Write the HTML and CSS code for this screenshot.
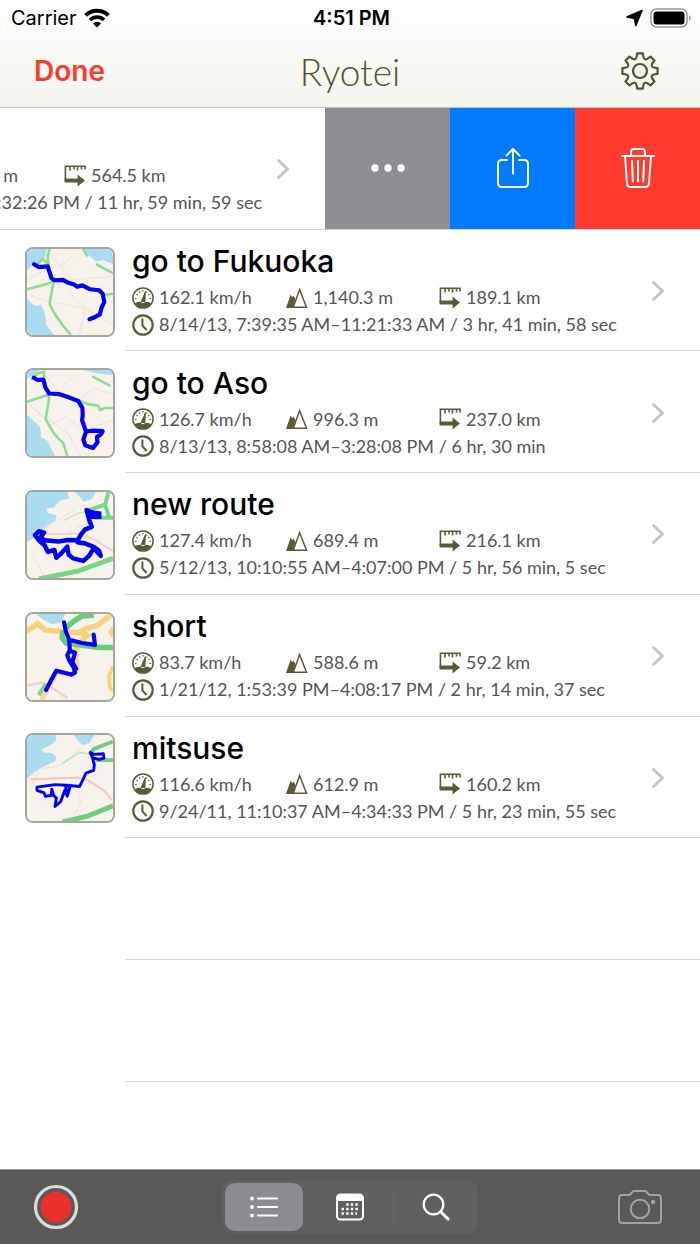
FILE: index.html
```html
<!DOCTYPE html>
<html lang="en">
<head>
  <meta charset="UTF-8">
  <meta name="viewport" content="width=device-width, initial-scale=1">
  <title>Ryotei</title>
  <link rel="stylesheet" href="styles.css">
</head>
<body>
  <!-- shared icons -->
  <svg class="sprite" aria-hidden="true">
    <symbol id="speed" viewBox="0 0 22 22">
      <circle cx="11" cy="11" r="10.1" fill="#fff" stroke="currentColor" stroke-width="1.5"/>
      <path d="M2.6 16.2Q6 14.6 8.6 14.8A2.7 2.7 0 0 0 13.4 14.8Q16 14.6 19.4 16.2A10 10 0 0 1 2.6 16.2Z" fill="currentColor"/>
      <path d="M9.2 14.6L13.4 4.6L12.9 14.6Z" fill="currentColor" stroke="currentColor" stroke-linejoin="round"/>
      <path d="M3 11.5h1.6M17.4 11.5H19M4.4 7.2l1.3.8M7.2 4.3l.8 1.3M11 3v1.6M16.2 8l1.4-.8M15.2 4.6l-.6 1" stroke="currentColor" stroke-width="1.2"/>
    </symbol>
    <symbol id="climb" viewBox="0 0 22 22">
      <path d="M0 21L4.6 7.8L6.4 10.2L7.6 8.6L9.4 12L6.8 21Z" fill="currentColor"/>
      <path d="M7.3 20.2L13.6 2.6L20.5 20.2Z" fill="#fff" stroke="currentColor" stroke-width="1.5"/>
    </symbol>
    <symbol id="distance" viewBox="0 0 22 22">
      <path d="M21 4.6V1.2H1.4V16M6 1.500v4M10 1.500v3M13.500 1.500v4M17.500 1.500v3" fill="none" stroke="currentColor" stroke-width="1.6"/>
      <path d="M.6 13.400h13v-4l7.400 6.200-7.400 6v-4.200H.6Z" fill="currentColor"/>
    </symbol>
    <symbol id="clock" viewBox="0 0 22 22">
      <circle cx="11" cy="11" r="9.7" fill="none" stroke="currentColor" stroke-width="2.2"/>
      <path d="M10.4 4.5V11.4L14.6 16" fill="none" stroke="currentColor" stroke-width="2"/>
    </symbol>
    <symbol id="chevron" viewBox="0 0 14 22">
      <path d="M2.5 2.5L11.5 11L2.5 19.5" fill="none" stroke="currentColor" stroke-width="2.8" stroke-linecap="round"/>
    </symbol>
    <path id="tooth" d="M14.1 7.2C15.6 6.6 15.8 4.6 16.2 1.4H21.8C22.2 4.6 22.4 6.6 23.9 7.2"/>
  </svg>

  <div class="app">
    <header class="header">
      <div class="status">
        <div class="carrier">
          <span>Carrier</span>
          <svg width="26" height="20" viewBox="0 0 26 20" fill="none" stroke="#000" stroke-width="4">
            <path d="M1.6 7.4A16 16 0 0 1 24.4 7.4"/>
            <path d="M6 12A10 10 0 0 1 20 12" stroke-width="3.6"/>
            <path d="M13 19.4L9 15.5A5.6 5.6 0 0 1 17 15.5Z" fill="#000" stroke="none"/>
          </svg>
        </div>
        <span class="time">4:51 PM</span>
        <div class="power">
          <svg width="17" height="18" viewBox="0 0 17 18">
            <path d="M1 8L16 1.500L9.800 16.500L8.500 9.500Z" stroke="#000" stroke-width="1.600" stroke-linejoin="round"/>
          </svg>
          <svg width="42" height="20" viewBox="0 0 42 20">
            <rect x="1" y="1" width="36" height="18" rx="5.5" fill="#fff" stroke="#999" stroke-width="1.5"/>
            <rect x="3.5" y="3.5" width="31" height="13" rx="3"/>
            <path d="M39 7Q42.4 10 39 13Z" fill="#999"/>
          </svg>
        </div>
      </div>
      <nav class="nav">
        <button class="done" type="button">Done</button>
        <h1 class="brand">Ryotei</h1>
        <button class="icon-button" type="button" aria-label="Settings">
          <svg width="38" height="38" viewBox="0 0 38 38" fill="none" stroke="#55532f" stroke-width="2.2" stroke-linejoin="round">
            <circle cx="19" cy="19" r="7"/>
            <use href="#tooth"/>
            <use href="#tooth" transform="rotate(45 19 19)"/>
            <use href="#tooth" transform="rotate(90 19 19)"/>
            <use href="#tooth" transform="rotate(135 19 19)"/>
            <use href="#tooth" transform="rotate(180 19 19)"/>
            <use href="#tooth" transform="rotate(225 19 19)"/>
            <use href="#tooth" transform="rotate(270 19 19)"/>
            <use href="#tooth" transform="rotate(315 19 19)"/>
          </svg>
        </button>
      </nav>
    </header>

    <ul class="list">
      <!-- swiped row -->
      <li class="row swiped">
        <div class="content">
          <div class="thumb"></div>
          <div class="body">
            <div class="info">
              <h2 class="name">&nbsp;</h2>
              <div class="stats">
                <span class="stat"></span>
                <span class="stat"><svg class="icon"><use href="#climb"/></svg>1,204.6 m</span>
                <span class="stat"><svg class="icon"><use href="#distance"/></svg>564.5 km</span>
              </div>
              <div class="stat"><svg class="icon"><use href="#clock"/></svg>8/15/13, 12:32:27 AM–12:32:26 PM / 11 hr, 59 min, 59 sec</div>
            </div>
            <svg class="chevron"><use href="#chevron"/></svg>
          </div>
        </div>
        <div class="actions">
          <button class="action more" type="button" aria-label="More">
            <svg width="36" height="10" viewBox="0 0 36 10" fill="#fff">
              <circle cx="5" cy="5" r="3.7"/><circle cx="18" cy="5" r="3.7"/><circle cx="31" cy="5" r="3.7"/>
            </svg>
          </button>
          <button class="action share" type="button" aria-label="Share">
            <svg width="36" height="42" viewBox="0 0 36 42" fill="none" stroke="#fff" stroke-width="2" stroke-linecap="round" stroke-linejoin="round">
              <path d="M12 13H7Q3 13 3 17V36Q3 40 7 40H29Q33 40 33 36V17Q33 13 29 13H24"/>
              <path d="M18 26.5V2M11.5 8.5L18 2L24.5 8.5"/>
            </svg>
          </button>
          <button class="action delete" type="button" aria-label="Delete">
            <svg width="36" height="42" viewBox="0 0 36 42" fill="none" stroke="#fff" stroke-width="2" stroke-linecap="round" stroke-linejoin="round">
              <path d="M2 9H34M5 9L7 36.5Q7.2 40 10.5 40H25.5Q28.8 40 29 36.5L31 9"/>
              <path d="M11 9V5Q11 2 14 2H22Q25 2 25 5V9M12 14L12.8 34.5M18 14V34.5M24 14L23.2 34.5"/>
            </svg>
          </button>
        </div>
      </li>

      <li class="row">
        <div class="content">
          <svg class="thumb" viewBox="48 35 267 267" fill="none">
            <path d="M48 35H315V302H48Z" fill="#f7f2ec"/>
            <path d="M48 35H110L104 62L78 76L48 102ZM226 35H315V82L285 70L262 74L240 54ZM48 190L72 212L92 208L104 236L108 270L132 302H48Z" fill="#a9dcf1"/>
            <path d="M110 40L150 90L200 50M150 90L190 130L315 120M130 200L230 220L315 270M180 170L230 220L210 302M48 130L125 90M60 180L120 200" stroke="#e6e1dc" stroke-width="3"/>
            <path d="M118 35L112 58L116 96L130 140L118 205Q134 245 184 302M48 160L110 144L130 134M78 84L96 66L112 80M222 35L236 58M262 82L315 110M285 178L315 174" stroke="#8bdb92" stroke-width="8"/>
            <path d="M70 82L84 91L112 89L124 125L132 132L160 131L172 138L194 145L204 152L220 148L244 160L272 163L283 174L288 200L280 216L274 238L258 247L242 253" class="track"/>
          </svg>
          <div class="body">
            <div class="info">
              <h2 class="name">go to Fukuoka</h2>
              <div class="stats">
                <span class="stat"><svg class="icon"><use href="#speed"/></svg>162.1 km/h</span>
                <span class="stat"><svg class="icon"><use href="#climb"/></svg>1,140.3 m</span>
                <span class="stat"><svg class="icon"><use href="#distance"/></svg>189.1 km</span>
              </div>
              <div class="stat"><svg class="icon"><use href="#clock"/></svg>8/14/13, 7:39:35 AM–11:21:33 AM / 3 hr, 41 min, 58 sec</div>
            </div>
            <svg class="chevron"><use href="#chevron"/></svg>
          </div>
        </div>
      </li>

      <li class="row">
        <div class="content">
          <svg class="thumb" viewBox="33 24 267 267" fill="none">
            <path d="M33 24H300V291H33Z" fill="#f7f2ec"/>
            <path d="M33 24H70L50 42L33 50ZM205 24H300V40L250 34ZM33 164L56 184L74 202L76 232L96 244L120 291H33Z" fill="#a9dcf1"/>
            <path d="M90 40L130 90L180 40M190 120L240 80L300 100M100 200L150 170L210 210L300 180M60 150L160 220L200 291M40 130L80 170" stroke="#e6e1dc" stroke-width="3"/>
            <path d="M33 123L96 102L102 110L91 176Q112 222 146 252L158 291M45 54L66 34L86 30V50M198 120L222 130L254 135L260 148L276 142L300 142M236 44L292 73" stroke="#8bdb92" stroke-width="8"/>
            <path d="M54 48L66 55L84 54L90 78L102 97L134 99L160 108L192 120L205 142L206 164L204 180L216 215L240 212L268 214L262 224L250 232L252 248L238 266L214 258L208 240L216 216" class="track"/>
          </svg>
          <div class="body">
            <div class="info">
              <h2 class="name">go to Aso</h2>
              <div class="stats">
                <span class="stat"><svg class="icon"><use href="#speed"/></svg>126.7 km/h</span>
                <span class="stat"><svg class="icon"><use href="#climb"/></svg>996.3 m</span>
                <span class="stat"><svg class="icon"><use href="#distance"/></svg>237.0 km</span>
              </div>
              <div class="stat"><svg class="icon"><use href="#clock"/></svg>8/13/13, 8:58:08 AM–3:28:08 PM / 6 hr, 30 min</div>
            </div>
            <svg class="chevron"><use href="#chevron"/></svg>
          </div>
        </div>
      </li>

      <li class="row">
        <div class="content">
          <svg class="thumb" viewBox="33 24 267 267" fill="none">
            <path d="M33 24H300V291H33Z" fill="#f7f2ec"/>
            <path d="M33 24H158L164 44L134 52L116 72L94 74L98 90L124 96L122 114L80 142L56 164L33 180ZM182 24H246L234 46L210 54L198 40Z" fill="#a9dcf1"/>
            <path d="M48 150L130 110L180 80M160 150L220 120L290 80M50 220L90 291M220 200L200 240L215 270" stroke="#e6e1dc" stroke-width="3"/>
            <path d="M80 154H200L250 176L300 208" stroke="#f3d2c9" stroke-width="7"/>
            <path d="M148 112L190 90L225 84" stroke="#c3e6bb" stroke-width="4"/>
            <path d="M224 80L256 70L276 62L286 24M276 66L290 108M244 104L300 104" stroke="#78d488" stroke-width="12"/>
            <path d="M70 294L190 270L300 230" stroke="#78d488" stroke-width="15"/>
            <path d="M240 90L218 80L226 110L234 132L214 140L202 154L190 174L160 173L130 178L88 174L74 166L86 150L70 146L58 158L70 174L88 190L98 210L118 204L124 228L138 216L158 194L162 218L176 230L208 238L226 222L240 198L262 222L256 206L240 194L214 184L190 180" class="track wide"/>
            <path d="M226 84L260 88V104H232Z" fill="#0500f0" stroke="#0500f0" stroke-width="8"/>
          </svg>
          <div class="body">
            <div class="info">
              <h2 class="name">new route</h2>
              <div class="stats">
                <span class="stat"><svg class="icon"><use href="#speed"/></svg>127.4 km/h</span>
                <span class="stat"><svg class="icon"><use href="#climb"/></svg>689.4 m</span>
                <span class="stat"><svg class="icon"><use href="#distance"/></svg>216.1 km</span>
              </div>
              <div class="stat"><svg class="icon"><use href="#clock"/></svg>5/12/13, 10:10:55 AM–4:07:00 PM / 5 hr, 56 min, 5 sec</div>
            </div>
            <svg class="chevron"><use href="#chevron"/></svg>
          </div>
        </div>
      </li>

      <li class="row">
        <div class="content">
          <svg class="thumb" viewBox="33 24 267 267" fill="none">
            <path d="M33 24H300V291H33Z" fill="#f7f2ec"/>
            <path d="M60 24H152L140 50L110 56L84 42Z" fill="#a9dcf1"/>
            <path d="M33 246L84 236L160 286" stroke="#f3d2c9" stroke-width="8"/>
            <path d="M70 276L92 242" stroke="#78d488" stroke-width="14"/>
            <path d="M33 78L66 54L90 74L150 80L196 82L210 72L250 60L296 26M196 82L220 90L190 120L182 150" stroke="#f7d27c" stroke-width="17"/>
            <path d="M300 66L292 80L300 94M300 186L288 216L290 250L300 264" stroke="#f7d27c" stroke-width="12"/>
            <path d="M184 140L188 196L176 214L124 204L78 291" stroke="#f8d79a" stroke-width="17"/>
            <path d="M146 76L142 98L154 114L210 122L256 128L300 128M150 70L176 48L204 30L240 28" stroke="#6bcb7c" stroke-width="17"/>
            <path d="M148 50L154 80L164 104L204 114L244 120L240 88M164 104L166 136L158 152L164 168L178 190L182 206L170 212L124 200L110 226L92 260M166 138L182 144L174 174L186 194" class="track"/>
          </svg>
          <div class="body">
            <div class="info">
              <h2 class="name">short</h2>
              <div class="stats">
                <span class="stat"><svg class="icon"><use href="#speed"/></svg>83.7 km/h</span>
                <span class="stat"><svg class="icon"><use href="#climb"/></svg>588.6 m</span>
                <span class="stat"><svg class="icon"><use href="#distance"/></svg>59.2 km</span>
              </div>
              <div class="stat"><svg class="icon"><use href="#clock"/></svg>1/21/12, 1:53:39 PM–4:08:17 PM / 2 hr, 14 min, 37 sec</div>
            </div>
            <svg class="chevron"><use href="#chevron"/></svg>
          </div>
        </div>
      </li>

      <li class="row">
        <div class="content">
          <svg class="thumb" viewBox="33 24 267 267" fill="none">
            <path d="M33 24H300V291H33Z" fill="#f7f2ec"/>
            <path d="M33 24H122L124 40L108 54L78 70L86 78L110 80L124 92L120 106L80 124L56 140L33 160ZM178 24H242L228 48L206 56L190 40Z" fill="#a9dcf1"/>
            <path d="M46 180L70 130L130 120L200 70M190 190L200 230L180 270M50 160L80 230" stroke="#e6e1dc" stroke-width="3"/>
            <path d="M42 162L190 156L220 164L270 194L296 226" stroke="#f3c9c0" stroke-width="7"/>
            <path d="M144 112L196 78L220 82" stroke="#b5e2ae" stroke-width="4"/>
            <path d="M226 86L240 68L264 58L300 44M246 102H300" stroke="#6bcf7d" stroke-width="12"/>
            <path d="M144 294L220 276L300 244" stroke="#6bcf7d" stroke-width="15"/>
            <path d="M236 94L230 78L240 84L270 82L272 96L256 100L236 94L242 116L240 134L216 142L206 164L196 184L156 180L120 178L64 186V196L86 204L90 214L108 212L110 192L116 212L124 220L120 246L138 230L150 196L158 214L168 180L152 184L160 206" class="track thin"/>
          </svg>
          <div class="body">
            <div class="info">
              <h2 class="name">mitsuse</h2>
              <div class="stats">
                <span class="stat"><svg class="icon"><use href="#speed"/></svg>116.6 km/h</span>
                <span class="stat"><svg class="icon"><use href="#climb"/></svg>612.9 m</span>
                <span class="stat"><svg class="icon"><use href="#distance"/></svg>160.2 km</span>
              </div>
              <div class="stat"><svg class="icon"><use href="#clock"/></svg>9/24/11, 11:10:37 AM–4:34:33 PM / 5 hr, 23 min, 55 sec</div>
            </div>
            <svg class="chevron"><use href="#chevron"/></svg>
          </div>
        </div>
      </li>

      <!-- empty rows -->
      <li class="row empty"></li>
      <li class="row empty"></li>
    </ul>

    <footer class="toolbar">
      <button class="icon-button record" type="button" aria-label="Record">
        <svg width="46" height="46" viewBox="0 0 46 46">
          <circle cx="23" cy="23" r="20.5" fill="none" stroke="#dcdcdc" stroke-width="3.2"/>
          <circle cx="23" cy="23" r="15.5" fill="#e8312a"/>
        </svg>
      </button>
      <div class="segments">
        <button class="segment selected" type="button" aria-label="List">
          <svg width="30" height="24" viewBox="0 0 30 24" fill="#fff" stroke="#fff" stroke-width="2.2" stroke-linecap="round">
            <path d="M9 3.5H28M9 12H28M9 20.5H28"/>
            <g stroke="none"><circle cx="3" cy="3.5" r="1.9"/><circle cx="3" cy="12" r="1.9"/><circle cx="3" cy="20.5" r="1.9"/></g>
          </svg>
        </button>
        <button class="segment" type="button" aria-label="Calendar">
          <svg width="30" height="28" viewBox="0 0 30 28">
            <rect x="2" y="1.5" width="26" height="25" rx="3.5" fill="none" stroke="#fff" stroke-width="2"/>
            <path d="M2 8V4Q2 1.5 5 1.5H25Q28 1.5 28 4V8Z" fill="#fff"/>
            <path d="M11.2 11.5H25M6.6 16H25M6.6 20.5H22" fill="none" stroke="#fff" stroke-width="2.4" stroke-dasharray="2.4 2.2"/>
          </svg>
        </button>
        <button class="segment" type="button" aria-label="Search">
          <svg width="28" height="28" viewBox="0 0 28 28" fill="none" stroke="#fff" stroke-linecap="round">
            <circle cx="11.5" cy="11.5" r="9.8" stroke-width="2.2"/>
            <path d="M19 19L26 26" stroke-width="3"/>
          </svg>
        </button>
      </div>
      <button class="icon-button" type="button" aria-label="Camera">
        <svg width="46" height="36" viewBox="0 0 46 36" fill="none" stroke="#a3a3a3" stroke-width="2" stroke-linejoin="round">
          <path d="M5 6H12.5L16.5 2H28.5L32.5 6H41Q44 6 44 9V31Q44 34 41 34H5Q2 34 2 31V9Q2 6 5 6Z"/>
          <circle cx="23" cy="20" r="9.3"/>
          <circle cx="36" cy="13" r="2.2" fill="#a3a3a3" stroke="none"/>
        </svg>
      </button>
    </footer>
  </div>
</body>
</html>
```
FILE: styles.css
```css
* {
  box-sizing: border-box;
}
body {
  margin: 0;
  background: #fff;
  color: #000;
  font-family: Inter, "Liberation Sans", sans-serif;
}
button {
  border: none;
  padding: 0;
  background: none;
  font: inherit;
  cursor: pointer;
}
svg {
  display: block;
}
.sprite {
  position: absolute;
  width: 0;
  height: 0;
}
.app {
  display: flex;
  flex-direction: column;
  min-height: 100vh;
}

/* header */
.header {
  background: linear-gradient(#fff, #f3f4ee);
  border-bottom: 1px solid #c3c4bc;
}
.status {
  display: grid;
  grid-template-columns: 1fr auto 1fr;
  align-items: center;
  height: 35px;
  padding: 0 8px 0 11px;
  font-size: 20px;
}
.carrier,
.power {
  display: flex;
  align-items: center;
  gap: 7px;
}
.power {
  justify-content: flex-end;
}
.time {
  font-weight: 600;
}
.nav {
  display: grid;
  grid-template-columns: 1fr auto 1fr;
  align-items: center;
  height: 72px;
  padding: 0 32px;
}
.done {
  justify-self: start;
  padding: 0 2px;
  color: #ff3b30;
  font-size: 28px;
  font-weight: 600;
}
.brand {
  margin: 0;
  color: #55532f;
  font-family: Lato, sans-serif;
  font-size: 37px;
  font-weight: 300;
}
.icon-button {
  display: flex;
  align-items: center;
  justify-content: center;
  justify-self: end;
  width: 56px;
  height: 48px;
}

/* list */
.list {
  flex: 1;
  display: grid;
  grid-template-rows: repeat(8, 46fr) 33fr;
  margin: 0;
  padding: 0;
  list-style: none;
}
.row {
  display: flex;
  overflow: hidden;
}
.content {
  display: flex;
  align-items: center;
  flex: 0 0 100%;
}
.thumb {
  flex: none;
  width: 90px;
  height: 90px;
  margin: 2px 10px 0 25px;
  border: 2px solid #a6a69e;
  border-radius: 8px;
}
.track {
  stroke: #0500f0;
  stroke-width: 13;
  stroke-linejoin: round;
  stroke-linecap: round;
}
.track.wide {
  stroke-width: 14;
}
.track.thin {
  stroke-width: 9;
}
.body {
  flex: 1;
  display: flex;
  align-items: center;
  justify-content: space-between;
  align-self: stretch;
  padding: 2px 35px 0 7px;
  border-bottom: 1px solid #d6d6d6;
}
.name {
  margin: 0 0 6px;
  font-size: 30px;
  font-weight: 500;
  line-height: 34px;
}
.stats {
  display: grid;
  grid-template-columns: 154px 153px auto;
}
.stat {
  display: flex;
  align-items: center;
  gap: 5px;
  color: #555;
  font-family: Lato, sans-serif;
  font-size: 18px;
  line-height: 27px;
  white-space: nowrap;
}
.icon {
  flex: none;
  width: 22px;
  height: 22px;
  color: #5c5a36;
}
.chevron {
  flex: none;
  width: 14px;
  height: 22px;
  color: #c2c2c5;
}
.empty::before {
  content: "";
  width: 125px;
}
.empty::after {
  content: "";
  flex: 1;
  border-bottom: 1px solid #d6d6d6;
}

/* swipe actions */
.swiped {
  justify-content: flex-end;
  border-bottom: 1px solid #d6d6d6;
}
.swiped .body {
  border-bottom: none;
}
.actions {
  display: flex;
  flex: none;
}
.action {
  display: flex;
  align-items: center;
  justify-content: center;
  width: 125px;
}
.more {
  background: #8e8d93;
}
.share {
  background: #007aff;
}
.delete {
  background: #ff3b30;
}

/* toolbar */
.toolbar {
  display: grid;
  grid-template-columns: 1fr auto 1fr;
  align-items: center;
  height: 75px;
  padding: 0 32px;
  background: #595959;
  border-top: 1px solid #999;
}
.record {
  justify-self: start;
  width: 48px;
}
.segments {
  display: flex;
  gap: 8px;
  padding: 3px;
  border-radius: 12px;
  background: linear-gradient(#6a6a6c, #6a6a6c) 171px center / 1px 31px no-repeat #606062;
}
.segment {
  display: flex;
  align-items: center;
  justify-content: center;
  width: 78px;
  height: 48px;
  border-radius: 10px;
}
.selected {
  background: #8c8b90;
}
```
